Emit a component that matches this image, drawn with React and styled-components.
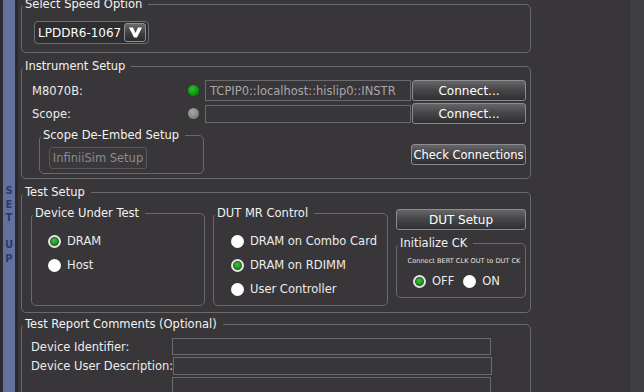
import React from 'react'
import styled, { createGlobalStyle } from 'styled-components'

const GlobalStyle = createGlobalStyle`
    html, body {
        margin: 0;
        padding: 0;
        background: #383638;
    }
    body {
        font-family: 'DejaVu Sans', Verdana, sans-serif;
        font-size: 11px;
        color: #e6e6e6;
    }
`

const Frame = styled.div`
    display: flex;
    width: 644px;
    height: 392px;
    overflow: hidden;
    background: #383638;
`

const SideTab = styled.div`
    flex: 0 0 12px;
    border-left: 3px solid #2c2b31;
    border-right: 3px solid #2a292b;
    background: #63729a;
    display: flex;
    flex-direction: column;
    align-items: center;
    padding-top: 185px;
`

const TabText = styled.span`
    writing-mode: vertical-rl;
    text-orientation: upright;
    letter-spacing: 2.6px;
    color: #2b3a6b;
    font-size: 10px;
    font-weight: bold;
`

const Main = styled.div`
    flex: 0 0 510px;
    display: flex;
    flex-direction: column;
    gap: 7px;
    padding-left: 3px;
    margin-top: -2px;
`

const Filler = styled.div`
    flex: 1;
`

const RightEdge = styled.div`
    flex: 0 0 14px;
    background: #3f3e40;
`

const Group = styled.fieldset`
    margin: ${({ $mt }) => $mt || 0}px 0 0 ${({ $ml }) => $ml || 0}px;
    padding: 0;
    border: 1px solid #6a696b;
    border-radius: 5px;
    min-width: 0;
    box-sizing: border-box;
    width: ${({ $w }) => ($w ? `${$w}px` : 'auto')};
    height: ${({ $h }) => $h}px;
    flex: none;
`

const Legend = styled.legend`
    padding: 0 6px 0 2px;
    margin-left: 1px;
    color: #f2f2f2;
    font-size: 11.5px;
    line-height: 13px;
    white-space: nowrap;
`

const Body = styled.div`
    padding: ${({ $pad }) => $pad};
`

const Combo = styled.div`
    display: inline-flex;
    align-items: center;
    gap: 3px;
    height: 23px;
    padding: 0 2px 0 3px;
    border: 1px solid #6f6e70;
    border-radius: 4px;
    background: #2e2d2f;
    color: #ffffff;
    font-size: 12px;
    box-sizing: border-box;
`

const ComboButton = styled.span`
    display: flex;
    align-items: center;
    justify-content: center;
    width: 22px;
    height: 19px;
    border: 1px solid #8f8e90;
    border-radius: 3px;
    background: linear-gradient(#6a696b, #3c3b3d 60%, #2c2b2d);
    box-sizing: border-box;
`

const Row = styled.div`
    display: flex;
    align-items: center;
    margin-top: ${({ $mt }) => $mt || 0}px;
`

const Label = styled.span`
    flex: 0 0 ${({ $w }) => $w}px;
    color: #ececec;
    font-size: 11.5px;
    white-space: nowrap;
`

const Dot = styled.span`
    flex: 0 0 11px;
    height: 11px;
    margin-right: 6px;
    border-radius: 50%;
    background: ${({ $on }) =>
        $on
            ? 'radial-gradient(circle at 40% 35%, #2fc02f, #0a8a0a 70%)'
            : 'radial-gradient(circle at 40% 35%, #a8a8a8, #7e7e7e 70%)'};
`

const Field = styled.div`
    flex: 0 0 ${({ $w }) => $w}px;
    height: ${({ $h }) => $h}px;
    display: flex;
    align-items: center;
    padding-left: 4px;
    border: 1px solid #6b6a6c;
    background: #383638;
    color: #a9a8aa;
    font-size: 11.5px;
    white-space: nowrap;
    overflow: hidden;
    box-sizing: border-box;
`

const Button = styled.div`
    flex: none;
    width: ${({ $w }) => $w}px;
    height: ${({ $h }) => $h || 21}px;
    margin-left: ${({ $ml }) => $ml || 0}px;
    margin-top: ${({ $mt }) => $mt || 0}px;
    display: flex;
    align-items: center;
    justify-content: center;
    border: 1px solid ${({ $disabled }) => ($disabled ? '#58575a' : '#8d8c8e')};
    border-radius: 3px;
    background: ${({ $disabled }) =>
        $disabled
            ? '#3a383a'
            : 'linear-gradient(#666567, #48474a 45%, #2f2e30)'};
    color: ${({ $disabled }) => ($disabled ? '#8c8b8d' : '#ffffff')};
    font-size: ${({ $fs }) => $fs || 12}px;
    white-space: nowrap;
    box-sizing: border-box;
`

const Split = styled.div`
    display: flex;
    justify-content: space-between;
    align-items: flex-start;
    margin-top: ${({ $mt }) => $mt || 0}px;
`

const Columns = styled.div`
    display: flex;
    align-items: flex-start;
    gap: 8px;
    margin-top: 8px;
`

const Stack = styled.div`
    display: flex;
    flex-direction: column;
    gap: 7px;
    margin-top: 2px;
`

const RadioList = styled.div`
    display: flex;
    flex-direction: column;
`

const RadioRow = styled.div`
    display: flex;
    align-items: center;
    gap: 6px;
    height: ${({ $h }) => $h || 24}px;
    color: #ececec;
    font-size: 11.5px;
    white-space: nowrap;
`

const Radio = styled.span`
    flex: 0 0 13px;
    width: 13px;
    height: 13px;
    border-radius: 50%;
    box-sizing: border-box;
    background: ${({ $checked }) =>
        $checked
            ? 'radial-gradient(circle at 45% 40%, #46c046, #0f7d12 75%)'
            : '#ffffff'};
    border: ${({ $checked }) => ($checked ? '2px solid #e6e6e6' : 'none')};
    box-shadow: ${({ $checked }) =>
        $checked ? 'inset 0 0 0 1px #245a24' : 'none'};
`

const Hint = styled.div`
    margin-top: 6px;
    padding-left: 6px;
    text-align: center;
    font-size: 6.6px;
    line-height: 10px;
    color: #e4e4e4;
    white-space: nowrap;
`

const InlineRadios = styled.div`
    display: flex;
    align-items: center;
    gap: 9px;
    margin-top: 8px;
    padding-left: 16px;
`

const Chevron = () => (
    <svg width="13" height="11" viewBox="0 0 13 11">
        <polygon
            points="0,0.5 4,0.5 6.5,6 9,0.5 13,0.5 8,10.5 5,10.5"
            fill="#ffffff"
        />
    </svg>
)

const Choice = ({ checked, children, h }) => (
    <RadioRow $h={h}>
        <Radio $checked={checked} />
        {children}
    </RadioRow>
)

const App = () => (
    <>
        <GlobalStyle />
        <Frame>
            <SideTab>
                <TabText>SET UP</TabText>
            </SideTab>
            <Main>
                <Group $h={55}>
                    <Legend>Select Speed Option</Legend>
                    <Body $pad="10px 12px 0">
                        <Combo>
                            LPDDR6-1067
                            <ComboButton>
                                <Chevron />
                            </ComboButton>
                        </Combo>
                    </Body>
                </Group>

                <Group $h={119}>
                    <Legend>Instrument Setup</Legend>
                    <Body $pad="7px 4px 0 10px">
                        <Row>
                            <Label $w={156}>M8070B:</Label>
                            <Dot $on />
                            <Field $w={206} $h={21}>
                                TCPIP0::localhost::hislip0::INSTR
                            </Field>
                            <Button $w={114} $ml={1}>
                                Connect...
                            </Button>
                        </Row>
                        <Row $mt={2}>
                            <Label $w={156}>Scope:</Label>
                            <Dot />
                            <Field $w={206} $h={18} />
                            <Button $w={114} $ml={1}>
                                Connect...
                            </Button>
                        </Row>
                        <Split $mt={5}>
                            <Group $w={165} $h={45} $ml={7}>
                                <Legend>Scope De-Embed Setup</Legend>
                                <Body $pad="5px 9px 0">
                                    <Button $w={98} $h={22} $fs={11.5} $disabled>
                                        InfiniiSim Setup
                                    </Button>
                                </Body>
                            </Group>
                            <Button $w={115} $mt={15} $fs={11.5}>
                                Check Connections
                            </Button>
                        </Split>
                    </Body>
                </Group>

                <Group $h={127}>
                    <Legend>Test Setup</Legend>
                    <Body $pad="0 3px 0 9px">
                        <Columns>
                            <Group $w={174} $h={99}>
                                <Legend>Device Under Test</Legend>
                                <Body $pad="9px 0 0 16px">
                                    <RadioList>
                                        <Choice checked>DRAM</Choice>
                                        <Choice>Host</Choice>
                                    </RadioList>
                                </Body>
                            </Group>
                            <Group $w={175} $h={99}>
                                <Legend>DUT MR Control</Legend>
                                <Body $pad="9px 0 0 17px">
                                    <RadioList>
                                        <Choice>DRAM on Combo Card</Choice>
                                        <Choice checked>DRAM on RDIMM</Choice>
                                        <Choice>User Controller</Choice>
                                    </RadioList>
                                </Body>
                            </Group>
                            <Stack>
                                <Button $w={130}>DUT Setup</Button>
                                <Group $w={130} $h={61}>
                                    <Legend>Initialize CK</Legend>
                                    <Hint>Connect BERT CLK OUT to DUT CK</Hint>
                                    <InlineRadios>
                                        <Choice checked h={14}>
                                            OFF
                                        </Choice>
                                        <Choice h={14}>ON</Choice>
                                    </InlineRadios>
                                </Group>
                            </Stack>
                        </Columns>
                    </Body>
                </Group>

                <Group $h={100} $mt={-2}>
                    <Legend>Test Report Comments (Optional)</Legend>
                    <Body $pad="7px 0 0 9px">
                        <Row>
                            <Label $w={141}>Device Identifier:</Label>
                            <Field $w={319} $h={17} />
                        </Row>
                        <Row $mt={2}>
                            <Label $w={141}>Device User Description:</Label>
                            <Field $w={319} $h={18} />
                        </Row>
                        <Row $mt={2}>
                            <Label $w={141} />
                            <Field $w={319} $h={30} />
                        </Row>
                    </Body>
                </Group>
            </Main>
            <Filler />
            <RightEdge />
        </Frame>
    </>
)

export default App
